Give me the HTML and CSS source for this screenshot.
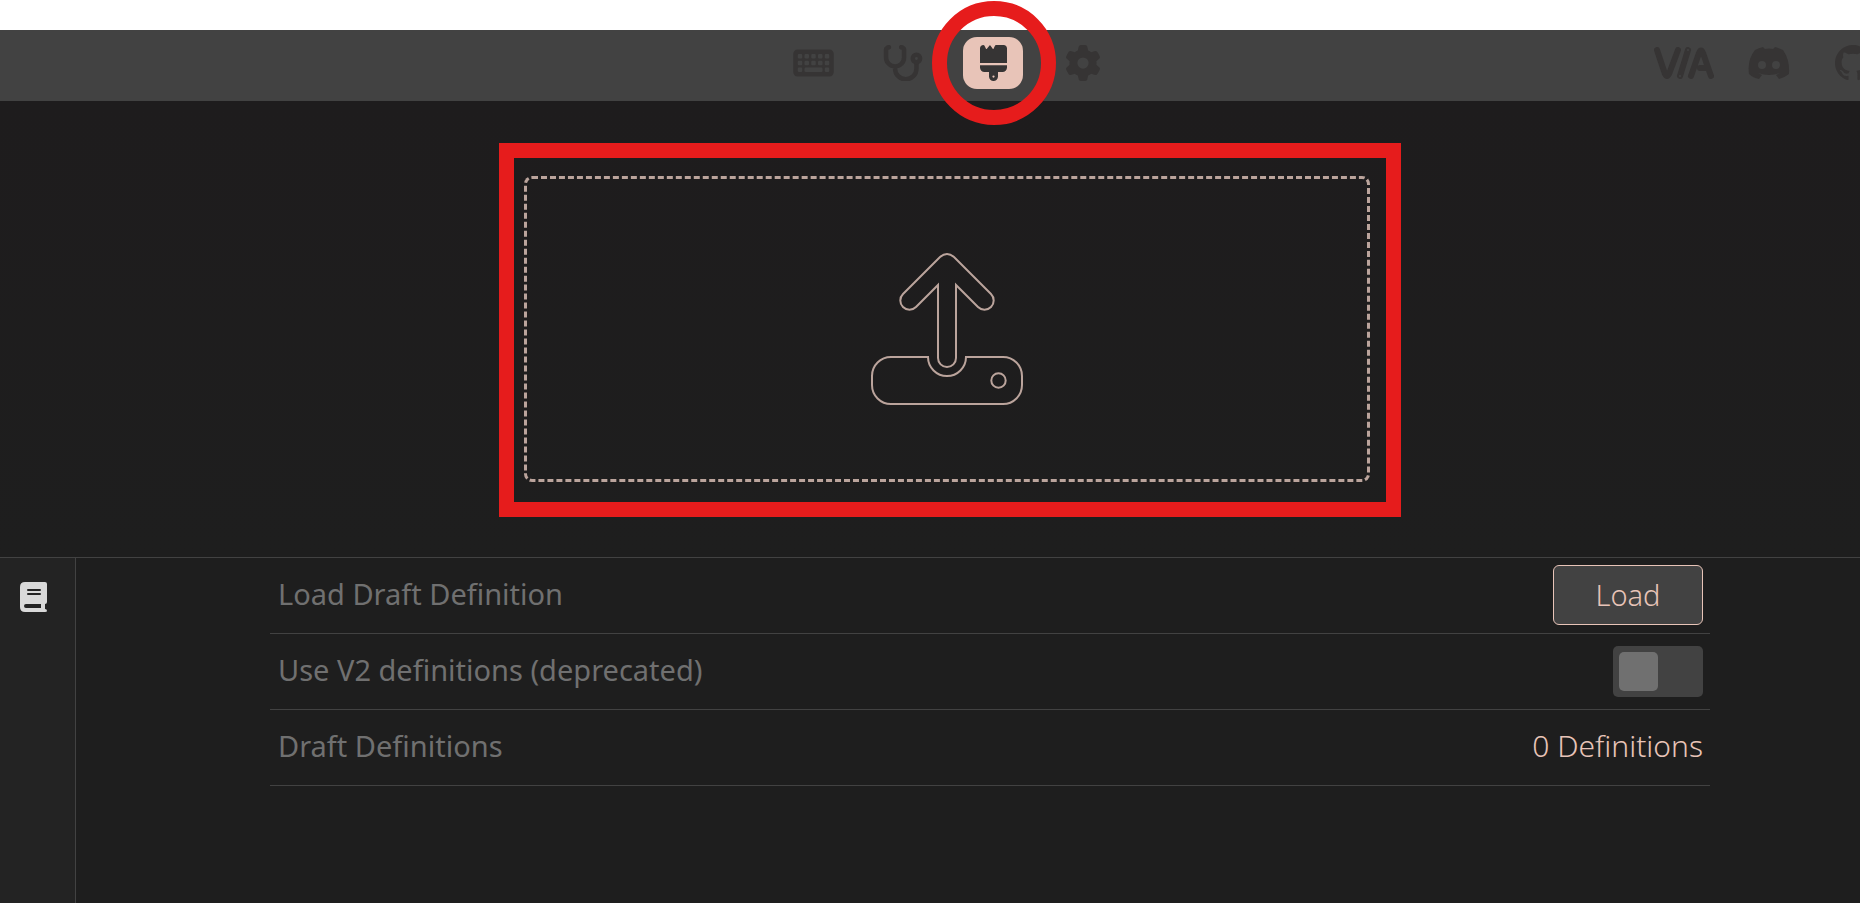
FILE: index.html
```
<!DOCTYPE html>
<html lang="en">
<head>
  <meta charset="UTF-8">
  <meta name="viewport" content="width=device-width, initial-scale=1.0">
  <title>VIA - Design</title>
  <link rel="stylesheet" href="styles.css">
</head>
<body>
  <div class="app">
    <header class="header">
      <nav class="main-nav">
        <a class="nav-item" href="#configure" aria-label="Configure">
          <svg class="icon" width="41" height="36" viewBox="0 0 576 512"><path fill-rule="evenodd" d="M64 64C28.700 64 0 92.700 0 128V384c0 35.300 28.700 64 64 64H512c35.300 0 64-28.700 64-64V128c0-35.300-28.700-64-64-64H64zM80 128h32q16 0 16 16v32q0 16-16 16H80q-16 0-16-16V144q0-16 16-16zM64 240q0-16 16-16h32q16 0 16 16v32q0 16-16 16H80q-16 0-16-16V240zM80 320h32q16 0 16 16v32q0 16-16 16H80q-16 0-16-16V336q0-16 16-16zM160 144q0-16 16-16h32q16 0 16 16v32q0 16-16 16H176q-16 0-16-16V144zM176 224h32q16 0 16 16v32q0 16-16 16H176q-16 0-16-16V240q0-16 16-16zM160 336q0-16 16-16H400q16 0 16 16v32q0 16-16 16H176q-16 0-16-16V336zM272 128h32q16 0 16 16v32q0 16-16 16H272q-16 0-16-16V144q0-16 16-16zM256 240q0-16 16-16h32q16 0 16 16v32q0 16-16 16H272q-16 0-16-16V240zM368 128h32q16 0 16 16v32q0 16-16 16H368q-16 0-16-16V144q0-16 16-16zM352 240q0-16 16-16h32q16 0 16 16v32q0 16-16 16H368q-16 0-16-16V240zM464 128h32q16 0 16 16v32q0 16-16 16H464q-16 0-16-16V144q0-16 16-16zM448 240q0-16 16-16h32q16 0 16 16v32q0 16-16 16H464q-16 0-16-16V240zM464 320h32q16 0 16 16v32q0 16-16 16H464q-16 0-16-16V336q0-16 16-16z"/></svg>
        </a>
        <a class="nav-item" href="#test" aria-label="Key Tester">
          <svg class="icon" width="41" height="36" viewBox="0 0 576 512"><path class="tube" d="M80 32L56 39Q40 45 40 62V176a128 128 0 0 0 256 0V62Q296 45 280 39L256 32M168 304V336a144 144 0 0 0 304 0V258"/><circle class="tube" cx="472" cy="192" r="52"/></svg>
        </a>
        <a class="nav-item nav-item-active" href="#design" aria-label="Design" aria-current="page">
          <svg class="icon" width="27" height="36" viewBox="0 0 384 512"><path fill-rule="evenodd" d="M228 0Q218 0 214 8L193 54Q187 62 181 54L148 6Q141 -2 135 6L98 55Q91 62 85 54L62 8Q58 0 48 0C21 0 0 21 0 48V256H384V48C384 21 363 0 336 0zM0 288V320c0 35 29 64 64 64h64v64a64 64 0 0 0 128 0V384h64c35 0 64-29 64-64V288H0zM192 432a16 16 0 1 1 0 32 16 16 0 1 1 0-32z"/></svg>
        </a>
        <a class="nav-item" href="#settings" aria-label="Settings">
          <svg class="icon" width="36" height="36" viewBox="0 0 512 512"><path fill-rule="evenodd" d="M495.900 166.600c3.200 8.700 .5 18.400-6.400 24.600l-43.300 39.400c1.100 8.300 1.700 16.800 1.700 25.400s-.6 17.100-1.700 25.400l43.300 39.400c6.900 6.200 9.600 15.900 6.400 24.600c-4.400 11.900-9.700 23.300-15.800 34.300l-4.700 8.100c-6.600 11-14 21.400-22.100 31.200c-5.900 7.200-15.700 9.600-24.500 6.800l-55.700-17.700c-13.400 10.300-28.200 18.900-44 25.400l-12.500 57.100c-2 9.100-9 16.300-18.200 17.800c-13.800 2.300-28 3.500-42.500 3.500s-28.700-1.200-42.500-3.500c-9.200-1.500-16.200-8.700-18.200-17.800l-12.500-57.100c-15.800-6.500-30.600-15.100-44-25.400L83.100 425.900c-8.800 2.800-18.600 .3-24.500-6.800c-8.100-9.800-15.500-20.200-22.100-31.200l-4.700-8.100c-6.100-11-11.400-22.400-15.800-34.300c-3.200-8.700-.5-18.400 6.400-24.600l43.300-39.400C64.600 273.100 64 264.600 64 256s.6-17.100 1.700-25.400L22.400 191.200c-6.900-6.200-9.600-15.900-6.400-24.600c4.400-11.900 9.700-23.300 15.800-34.300l4.700-8.100c6.600-11 14-21.400 22.100-31.200c5.900-7.200 15.700-9.600 24.500-6.800l55.700 17.700c13.400-10.300 28.200-18.900 44-25.400l12.500-57.100c2-9.100 9-16.300 18.200-17.800C227.300 1.200 241.500 0 256 0s28.700 1.200 42.500 3.500c9.200 1.500 16.200 8.700 18.200 17.800l12.500 57.100c15.800 6.500 30.600 15.100 44 25.400l55.700-17.700c8.800-2.800 18.600-.3 24.500 6.800c8.100 9.800 15.500 20.200 22.100 31.200l4.700 8.100c6.100 11 11.400 22.400 15.800 34.300zM256 336a80 80 0 1 0 0-160 80 80 0 1 0 0 160z"/></svg>
        </a>
      </nav>
      <div class="external-links">
        <a href="#via" aria-label="VIA">
          <svg class="icon" width="60" height="32" viewBox="0 0 60 32"><g class="logo-line"><path d="M3 3L11 27Q13 31 15 27L24 3M46 21H54M37 29L45 6Q47 1 49 6L57 29"/><path d="M34 3L26 29"/></g><circle class="logo-hole" cx="34" cy="3" r="1"/><circle class="logo-hole" cx="26" cy="29" r="1"/></svg>
        </a>
        <a href="#discord" aria-label="Discord">
          <svg class="icon" width="42" height="32" viewBox="0 0 42 32"><path fill-rule="evenodd" d="M15 0L17 2Q21 1 25 2L27 0Q31 1 35 3Q42 13 41 27Q36 31 31 32L28 28L32 26Q21 30 10 26L14 28L11 32Q5 31 1 27Q-1 13 7 3Q11 1 15 0zM14 14a4 4 0 1 0 0 8 4 4 0 1 0 0-8zM28 14a4 4 0 1 0 0 8 4 4 0 1 0 0-8z"/></svg>
        </a>
        <a class="github-link" href="#github" aria-label="GitHub">
          <svg class="icon" width="36" height="36" viewBox="0 0 16 16"><path d="M8 0C3.580 0 0 3.580 0 8c0 3.540 2.290 6.530 5.470 7.590.4.070.55-.17.55-.38 0-.19-.01-.82-.01-1.490-2.010.37-2.530-.49-2.690-.94-.09-.23-.48-.94-.82-1.130-.28-.15-.68-.52-.01-.53.63-.01 1.080.58 1.230.82.72 1.210 1.870.87 2.330.66.070-.52.28-.87.51-1.070-1.780-.2-3.640-.89-3.640-3.950 0-.87.31-1.590.82-2.150-.08-.2-.36-1.020.08-2.120 0 0 .67-.21 2.200.82A7.500 7.500 0 0 1 8 3.870c.68 0 1.360.09 2 .27 1.530-1.040 2.200-.82 2.200-.82.44 1.100.16 1.920.08 2.120.51.56.82 1.270.82 2.150 0 3.070-1.870 3.750-3.650 3.950.29.25.54.73.54 1.480 0 1.070-.01 1.930-.01 2.200 0 .21.15.46.55.38A8 8 0 0 0 16 8c0-4.420-3.580-8-8-8z"/></svg>
        </a>
      </div>
      <span class="mark-circle"></span>
    </header>

    <section class="upload">
      <div class="mark-box">
        <button class="drop-zone" type="button" aria-label="Upload definition">
          <svg class="upload-icon" width="156" height="156" viewBox="-2 -2 156 156">
            <path d="M69 4Q76 -2 83 4L120 41A9 9 0 0 1 107 54L85 32V105A9 9 0 0 1 67 105V32L45 54A9 9 0 0 1 32 41Z"/>
            <path d="M58 104H20A19 19 0 0 0 1 123V132A19 19 0 0 0 20 151H132A19 19 0 0 0 151 132V123A19 19 0 0 0 132 104H95A19 19 0 0 1 57 104"/>
            <circle cx="127.500" cy="127.500" r="7.200"/>
          </svg>
        </button>
      </div>
    </section>

    <main class="panel">
      <aside class="sidebar">
        <a class="sidebar-item" href="#definitions" aria-label="Definitions">
          <svg width="27" height="30" viewBox="0 0 27 30"><path fill-rule="evenodd" d="M5 0H25Q27 0 27 2V20Q27 22 25 22V27Q27 27 27 29Q27 30 25 30H5Q0 30 0 25V5Q0 0 5 0zM8 7Q7 7 7 8T8 9H20Q21 9 21 8T20 7H8zM8 11Q7 11 7 12T8 13H20Q21 13 21 12T20 11H8zM6 22Q4 22 4 24Q4 26 6 26H21V22H6z"/></svg>
        </a>
      </aside>
      <div class="settings">
        <div class="row">
          <span class="label">Load Draft Definition</span>
          <button class="load-button" type="button">Load</button>
        </div>
        <div class="row">
          <label class="label" for="useV2">Use V2 definitions (deprecated)</label>
          <input class="toggle" type="checkbox" id="useV2">
        </div>
        <div class="row">
          <span class="label">Draft Definitions</span>
          <span class="detail">0 Definitions</span>
        </div>
      </div>
    </main>
  </div>
</body>
</html>
```
FILE: styles.css
```
* {
  box-sizing: border-box;
}
body {
  margin: 0;
  background: #fff;
  font-family: "Noto Sans", sans-serif;
  font-size: 29px;
  overflow: hidden;
}
/* the app is slightly wider than the window */
.app {
  display: flex;
  flex-direction: column;
  width: calc(100% + 40px);
  min-height: 100vh;
  padding-top: 30px;
}
.header {
  position: relative;
  display: grid;
  grid-template-columns: 1fr auto 1fr;
  align-items: center;
  height: 71px;
  padding: 0 29px 0 25px;
  background: #424242;
}
.main-nav {
  grid-column: 2;
  display: flex;
  gap: 30px;
  padding-bottom: 5px;
}
.nav-item {
  display: flex;
  align-items: center;
  justify-content: center;
  width: 60px;
  height: 52px;
  border-radius: 14px;
}
.nav-item-active {
  background: #e8c4b8;
}
.icon {
  display: block;
  fill: #363434;
}
.tube {
  fill: none;
  stroke: #363434;
  stroke-width: 64;
  stroke-linecap: round;
}
.external-links {
  display: flex;
  align-items: center;
  justify-content: flex-end;
  gap: 34px;
  padding-bottom: 5px;
}
.github-link {
  margin-left: 11px;
}
.logo-line {
  fill: none;
  stroke: #363434;
  stroke-width: 6;
  stroke-linecap: round;
}
.logo-hole {
  fill: #424242;
}
.mark-circle {
  position: absolute;
  top: -29px;
  left: calc(50% - 18px);
  width: 124px;
  height: 124px;
  border: 15px solid #e61c1c;
  border-radius: 50%;
}
.upload {
  display: flex;
  justify-content: center;
  padding: 42px 0 40px;
  background: linear-gradient(#1e1c1d, #1e1e1e);
}
.mark-box {
  padding: 18px 16px 20px 10px;
  border: 15px solid #e61c1c;
}
.drop-zone {
  display: flex;
  align-items: center;
  justify-content: center;
  width: 846px;
  height: 306px;
  border: 3px dashed #bba49c;
  border-radius: 8px;
  background: none;
  cursor: pointer;
}
.upload-icon {
  fill: none;
  stroke: #bba49c;
  stroke-width: 2;
}
.panel {
  flex: 1;
  display: flex;
  border-top: 1px solid #424242;
  background: #1e1e1e;
}
.sidebar {
  width: 76px;
  margin-right: 4px;
  padding: 24px 20px;
  border-right: 1px solid #424242;
  background: #232323;
}
.sidebar-item svg {
  display: block;
  fill: #d9d9d9;
}
.settings {
  width: 1440px;
  margin: 0 auto;
}
.row {
  display: flex;
  align-items: center;
  justify-content: space-between;
  height: 76px;
  padding: 0 7px 0 8px;
  border-bottom: 1px solid #424242;
}
.label,
.detail {
  padding-bottom: 4px;
}
.label {
  color: #707070;
}
.detail {
  color: #e8c4b8;
  font-size: 30px;
  font-weight: 300;
}
.load-button {
  width: 150px;
  height: 60px;
  margin-bottom: 1px;
  padding: 0 0 2px;
  border: 1px solid #e8c4b8;
  border-radius: 6px;
  background: #424242;
  color: #e8c4b8;
  font: inherit;
  font-weight: 300;
  cursor: pointer;
}
.toggle {
  appearance: none;
  display: flex;
  width: 90px;
  height: 51px;
  margin: 0;
  padding: 6px;
  border-radius: 5px;
  background: #424242;
  cursor: pointer;
}
.toggle::before {
  content: "";
  width: 39px;
  height: 39px;
  border-radius: 5px;
  background: #707070;
}
.toggle:checked {
  justify-content: flex-end;
}
```
